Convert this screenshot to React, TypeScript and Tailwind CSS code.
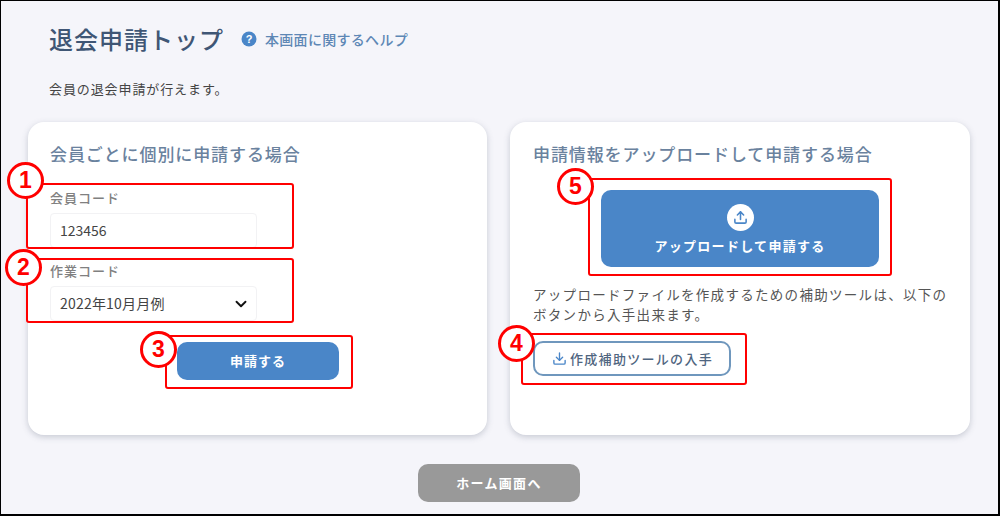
import { ChevronDown, Download, Upload } from "lucide-react"

const jp = "font-['Noto_Sans_CJK_JP','Noto_Sans',sans-serif]"

function Marker({ n, className }: { n: number; className: string }) {
  return (
    <div className={`absolute z-20 flex h-[37px] w-[37px] items-center justify-center rounded-full border-[3.5px] border-[#ff0000] bg-white font-['Liberation_Sans',sans-serif] text-[23px] leading-none font-bold text-[#ff0000] ${className}`}>
      {n}
    </div>
  )
}

function RedBox({ className }: { className: string }) {
  return <div className={`absolute z-10 rounded-[3px] border-2 border-[#ff0000] ${className}`} />
}

export default function App() {
  return (
    <div className={`relative h-[516px] w-[1000px] overflow-hidden border-t border-r-[2px] border-b-[2px] border-l border-black bg-[#f5f5fa] ${jp}`}>
      {/* Header */}
      <div className="flex items-center pt-[20px] pl-[48px]">
        <h1 className="text-[24px] leading-[36px] font-medium tracking-[1px] text-[#3f5675]">退会申請トップ</h1>
        <svg className="ml-[17px]" width="16" height="16" viewBox="0 0 16 16">
          <circle cx="8" cy="8" r="7.5" fill="#4a86c8" />
          <text x="8" y="12" textAnchor="middle" fontSize="11" fontWeight="700" fill="#fff" fontFamily="Liberation Sans">?</text>
        </svg>
        <a className="ml-[8px] text-[14px] leading-[20px] font-medium tracking-[0.3px] text-[#5d87b5]">本画面に関するヘルプ</a>
      </div>
      <p className="mt-[23px] pl-[48px] text-[13px] leading-[18px] tracking-[0.9px] text-[#444]">会員の退会申請が行えます。</p>

      {/* Cards */}
      <div className="mt-[24px] flex gap-[23px] pl-[27px]">
        <section className="h-[313px] w-[459px] rounded-[16px] bg-white px-[22px] pt-[20px] shadow-[0_2px_6px_rgba(80,90,110,0.28)]">
          <h2 className="text-[17px] leading-[24px] font-medium tracking-[0.9px] text-[#6a829e]">会員ごとに個別に申請する場合</h2>
          <label className="mt-[23px] block text-[13px] leading-[18px] font-medium tracking-[1px] text-[#808080]">会員コード</label>
          <div className="mt-[6px] flex h-[35px] w-[207px] items-center rounded-[4px] border border-[#f2f2f4] bg-white pl-[9px] text-[14px] text-[#444]">123456</div>
          <label className="mt-[14px] block text-[13px] leading-[18px] font-medium tracking-[1px] text-[#808080]">作業コード</label>
          <div className="mt-[6px] flex h-[35px] w-[207px] items-center justify-between rounded-[4px] border border-[#f2f2f4] bg-white pr-[6px] pl-[9px] text-[14px] tracking-[0.2px] text-[#444]">
            <span>2022年10月月例</span>
            <ChevronDown size={18} strokeWidth={2.5} className="text-[#111]" />
          </div>
          <button className="mt-[21px] ml-[127px] block h-[38px] w-[162px] rounded-[10px] bg-[#4a86c8] text-[13px] font-bold tracking-[1px] text-white">申請する</button>
        </section>

        <section className="h-[313px] w-[460px] rounded-[16px] bg-white pt-[20px] pr-[12px] pl-[23px] shadow-[0_2px_6px_rgba(80,90,110,0.28)]">
          <h2 className="text-[17px] leading-[24px] font-medium tracking-[0.9px] text-[#6a829e]">申請情報をアップロードして申請する場合</h2>
          <button className="mt-[24px] ml-[68px] flex h-[77px] w-[278px] flex-col items-center rounded-[10px] bg-[#4a86c8] pt-[14px] text-white">
            <span className="flex h-[27px] w-[27px] items-center justify-center rounded-full bg-white">
              <Upload size={15} strokeWidth={2.5} className="text-[#4a86c8]" />
            </span>
            <span className="mt-[5px] text-[13px] leading-[20px] font-bold tracking-[1.3px]">アップロードして申請する</span>
          </button>
          <p className="mt-[17px] text-[13.5px] leading-[20px] tracking-[1.3px] text-[#555]">アップロードファイルを作成するための補助ツールは、以下のボタンから入手出来ます。</p>
          <button className="mt-[17px] flex h-[35px] w-[198px] items-center gap-[3px] rounded-[10px] border-2 border-[#6f97bd] bg-white pl-[17px] text-[13px] font-medium tracking-[1.3px] text-[#4f6580]">
            <Download size={15} strokeWidth={2.2} className="text-[#4a86c8]" />
            作成補助ツールの入手
          </button>
        </section>
      </div>

      {/* Footer */}
      <div className="mt-[29px] flex justify-center pr-[1px]">
        <button className="h-[38px] w-[162px] rounded-[10px] bg-[#999999] text-[13px] font-bold tracking-[1.3px] text-white">ホーム画面へ</button>
      </div>

      {/* Annotations */}
      <RedBox className="top-[182px] left-[25px] h-[66px] w-[268px]" />
      <RedBox className="top-[257px] left-[25px] h-[65px] w-[268px]" />
      <RedBox className="top-[334px] left-[164px] h-[54px] w-[188px]" />
      <RedBox className="top-[332px] left-[520px] h-[52px] w-[226px]" />
      <RedBox className="top-[177px] left-[587px] h-[98px] w-[304px]" />
      <Marker n={1} className="top-[161px] left-[6px]" />
      <Marker n={2} className="top-[248px] left-[4px]" />
      <Marker n={3} className="top-[330px] left-[139px]" />
      <Marker n={4} className="top-[324px] left-[497px]" />
      <Marker n={5} className="top-[167px] left-[556px]" />
    </div>
  )
}
